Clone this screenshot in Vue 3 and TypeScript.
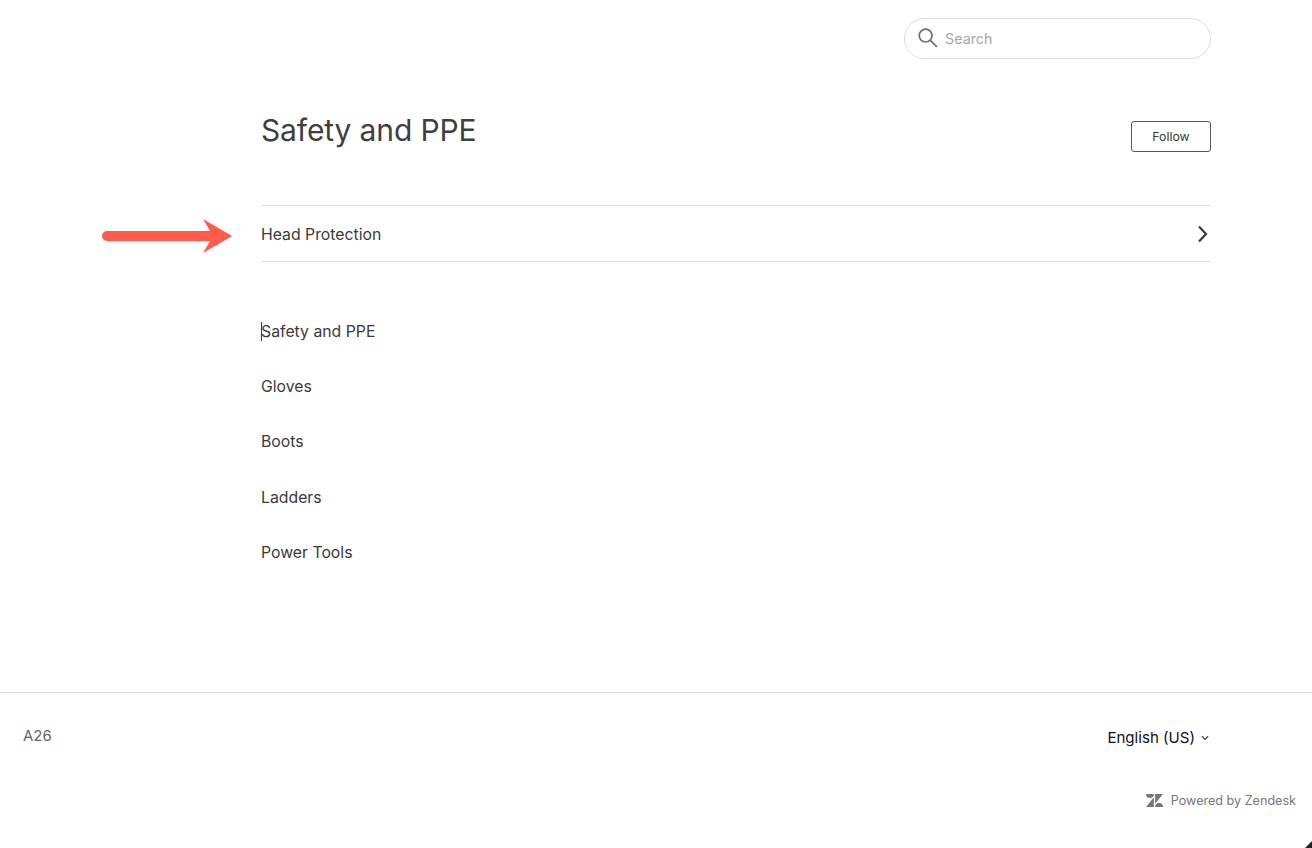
<template>
  <div class="page">
    <header class="topbar">
      <div class="search">
        <svg class="search-icon" width="20" height="20" viewBox="0 0 20 20" fill="none" stroke="#6f6f6f" stroke-width="1.7" stroke-linecap="round">
          <circle cx="7.6" cy="7.6" r="6.4" />
          <path d="M12.4 12.4l6 6" />
        </svg>
        <span class="search-text">Search</span>
      </div>
    </header>

    <main class="content">
      <div class="title-row">
        <h1>Safety and PPE</h1>
        <button class="follow">Follow</button>
      </div>

      <div class="section-row">
        <!-- flèche d'annotation posée sur la capture -->
        <svg class="annotation" width="132" height="36" viewBox="0 0 132 36">
          <path d="M6 13h103L102 1l29 17-29 17 7-12H6a5 5 0 0 1 0-10z" fill="#ff5a4a" />
        </svg>
        <span class="section-name">Head Protection</span>
        <svg width="12" height="18" viewBox="0 0 12 18" fill="none" stroke="#3a3a3a" stroke-width="2.2">
          <path d="M2 1.5L9 9 2 16.5" />
        </svg>
      </div>

      <ul class="links">
        <li v-for="(link, i) in links" :key="link" :class="{ caret: i === 0 }">{{ link }}</li>
      </ul>
    </main>

    <footer class="footer">
      <div class="footer-main">
        <span class="code">A26</span>
        <span class="lang">
          English (US)
          <svg width="8" height="6" viewBox="0 0 8 6" fill="none" stroke="#333" stroke-width="1.1">
            <path d="M0.8 1.2L4 4.4l3.2-3.2" />
          </svg>
        </span>
      </div>
      <div class="powered">
        <svg width="17" height="13" viewBox="0 0 16 12" fill="#777" preserveAspectRatio="none">
          <path d="M7.4 2.9V12H0zM7.4 0a3.7 3.7 0 0 1-7.4 0zM8.6 12a3.7 3.7 0 0 1 7.4 0zM8.6 9.1V0H16z" />
        </svg>
        <span>Powered by Zendesk</span>
      </div>
    </footer>
  </div>
</template>

<script setup lang="ts">
const links: string[] = ['Safety and PPE', 'Gloves', 'Boots', 'Ladders', 'Power Tools']
</script>

<style>
html,
body {
  background: #fff;
}
</style>

<style scoped>
.page {
  height: 848px;
  overflow: hidden;
  font-family: Inter, "Liberation Sans", sans-serif;
  color: #3a3a3a;
  position: relative;
}

/* coin de fenêtre visible sur la capture */
.page::after {
  content: "";
  position: absolute;
  right: 0;
  bottom: 0;
  width: 7px;
  height: 7px;
  background: #222;
  clip-path: polygon(100% 0, 100% 100%, 0 100%);
}

.topbar {
  display: flex;
  justify-content: flex-end;
  padding: 18px 101px 0 0;
}

.search {
  width: 307px;
  height: 41px;
  box-sizing: border-box;
  border: 1px solid #dedede;
  border-radius: 20.5px;
  display: flex;
  align-items: center;
  gap: 7px;
  padding-left: 13px;
}

.search-icon {
  margin-top: -2px;
}

.search-text {
  font-size: 14.3px;
  color: #a8a8a8;
}

.content {
  width: 950px;
  margin-left: 261px;
}

.title-row {
  display: flex;
  justify-content: space-between;
  align-items: flex-start;
  margin-top: 51px;
  height: 95px;
}

h1 {
  margin: 0;
  font-size: 30px;
  line-height: 40px;
  font-weight: 400;
  letter-spacing: -0.13px;
  color: #3f3f3f;
}

.follow {
  width: 80px;
  height: 31px;
  margin-top: 11px;
  background: #fff;
  border: 1px solid #555;
  border-radius: 3px;
  font: 12.3px Inter, "Liberation Sans", sans-serif;
  color: #3a3a3a;
  padding: 0;
}

.section-row {
  position: relative;
  height: 57px;
  box-sizing: border-box;
  border-top: 1px solid #dedede;
  border-bottom: 1px solid #dedede;
  display: flex;
  align-items: center;
  justify-content: space-between;
  padding-right: 2px;
  font-size: 15.8px;
}

.section-name {
  padding-top: 2px;
}

.annotation {
  position: absolute;
  left: -160px;
  top: 12px;
}

.links {
  list-style: none;
  margin: 41.85px 0 0;
  padding: 0;
  font-size: 15.8px;
}

.links li {
  height: 55.25px;
  line-height: 55.25px;
  position: relative;
}

.caret::before {
  content: "";
  position: absolute;
  left: 0;
  top: 18px;
  width: 1px;
  height: 19px;
  background: #3a3a3a;
}

.footer {
  position: absolute;
  left: 0;
  right: 0;
  top: 692px;
  border-top: 1px solid #dedede;
}

.footer-main {
  display: flex;
  justify-content: space-between;
  padding: 33px 103px 0 23px;
}

.code {
  font-size: 15px;
  color: #666;
}

.lang {
  font-size: 15.1px;
  color: #111;
  margin-top: 2px;
  display: flex;
  align-items: center;
  gap: 6px;
}

.powered {
  display: flex;
  justify-content: flex-end;
  align-items: center;
  gap: 8px;
  padding: 46px 16px 0 0;
  font-size: 12.6px;
  color: #777;
}
</style>
